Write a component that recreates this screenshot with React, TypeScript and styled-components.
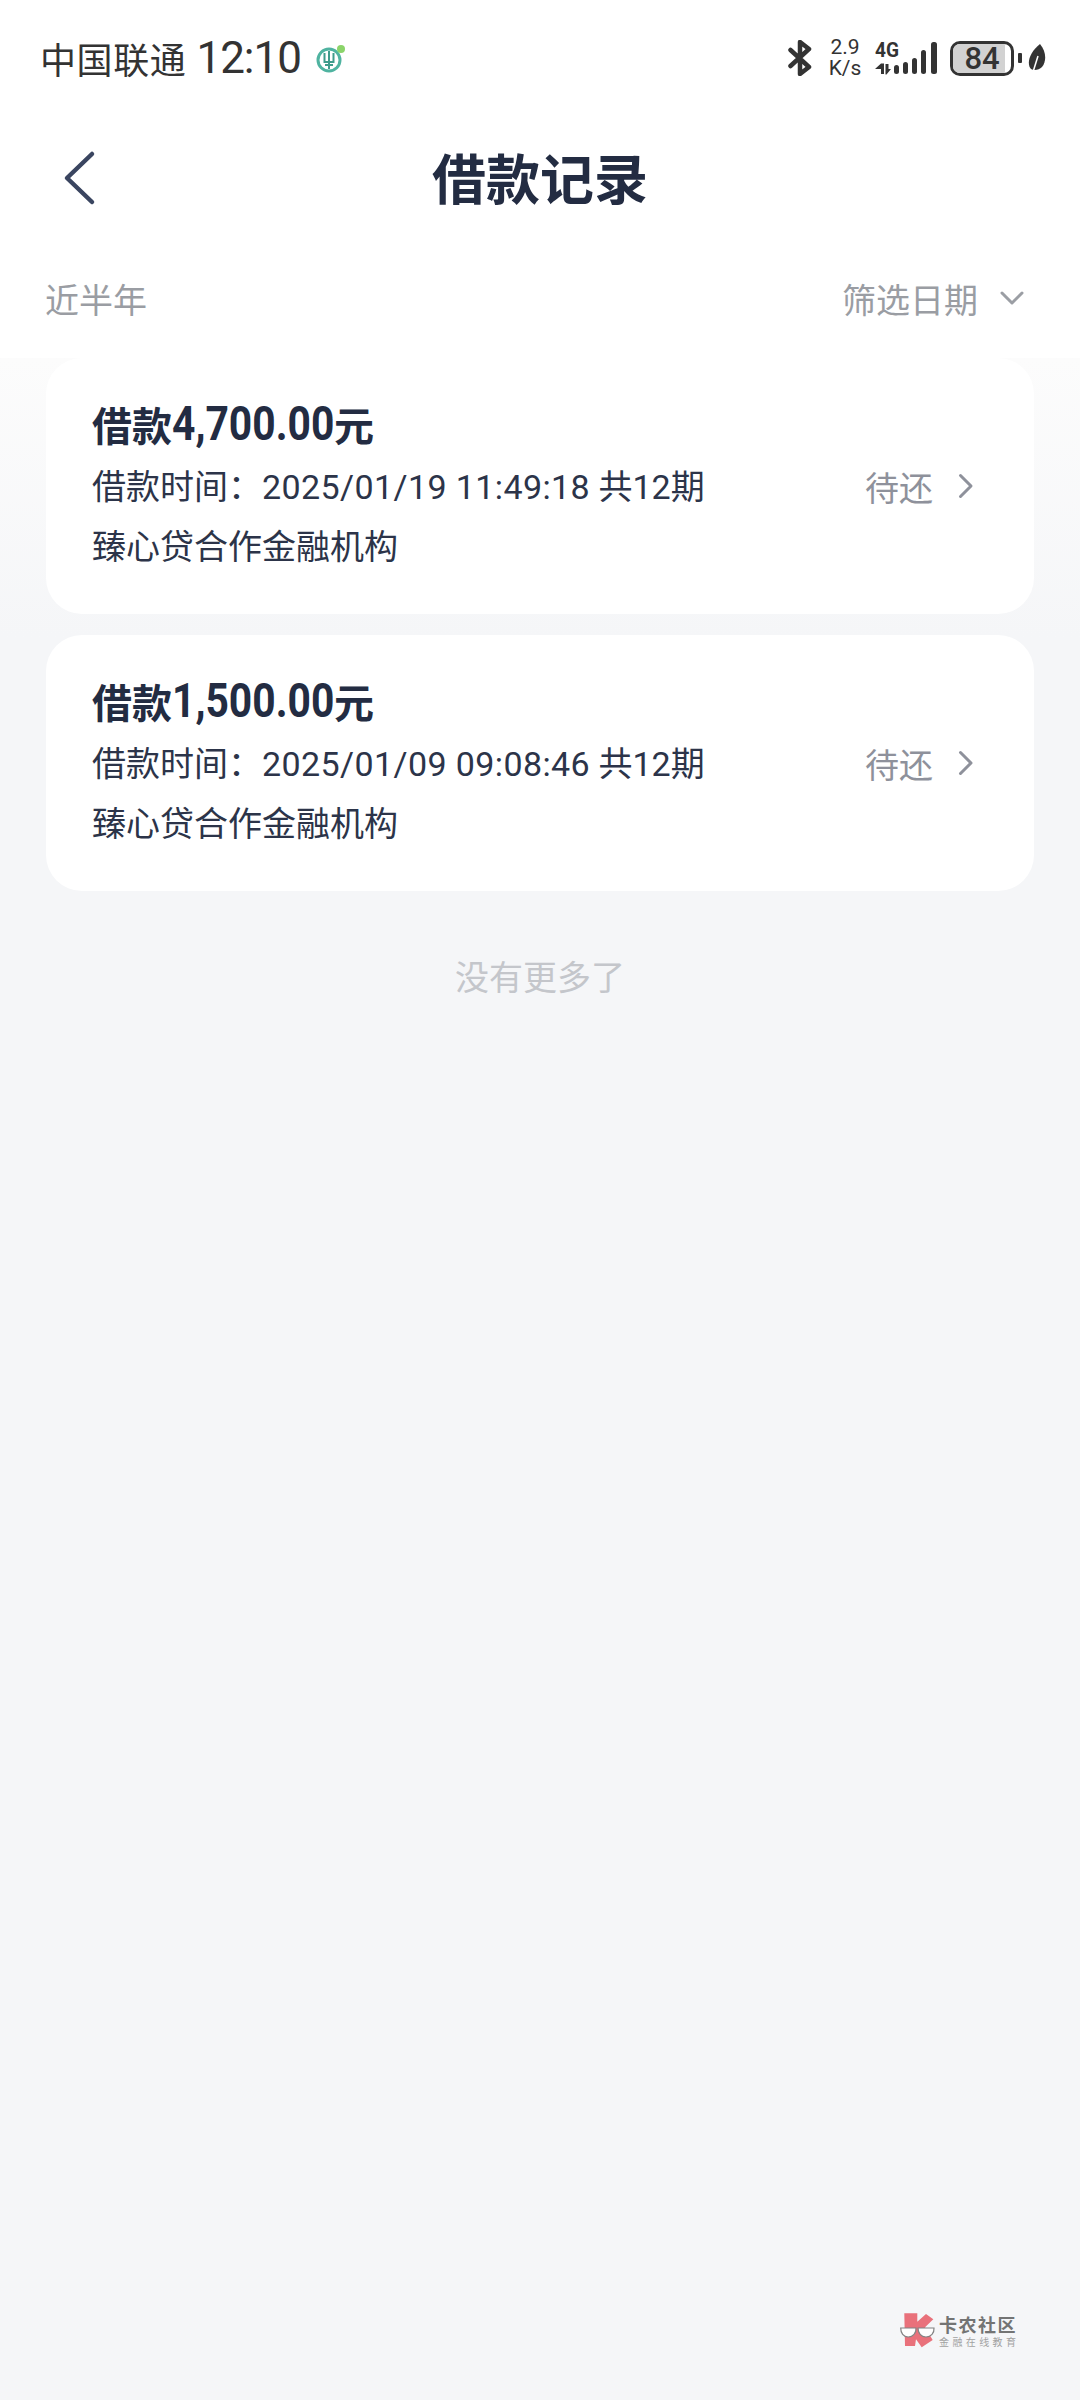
import React from "react";
import styled, { createGlobalStyle } from "styled-components";

const CJK = `"Noto Sans CJK SC", "Noto Sans", sans-serif`;

const GlobalStyle = createGlobalStyle`
  html, body {
    margin: 0;
    padding: 0;
  }
  body {
    font-family: ${CJK};
  }
`;

const records = [
  { amount: "4,700.00", time: "2025/01/19 11:49:18" },
  { amount: "1,500.00", time: "2025/01/09 09:08:46" },
];

const App = () => {
  return (
    <Page>
      <GlobalStyle />
      <Header>
        <StatusBar>
          <StatusLeft>
            <Carrier>中国联通</Carrier>
            <Clock>12:10</Clock>
            <BankIcon />
          </StatusLeft>
          <StatusRight>
            <BluetoothIcon />
            <Speed>
              <span>2.9</span>
              <span>K/s</span>
            </Speed>
            <SignalIcon />
            <Battery>
              <BatteryLevel />
              <BatteryText>84</BatteryText>
            </Battery>
            <BatteryCap />
            <LeafIcon />
          </StatusRight>
        </StatusBar>

        <NavBar>
          <BackButton>
            <svg width="34" height="56" viewBox="0 0 34 56" fill="none">
              <path d="M30 4 L5 28 L30 52" stroke="#3a4560" strokeWidth="4.5" strokeLinecap="round" strokeLinejoin="round" />
            </svg>
          </BackButton>
          <Title>借款记录</Title>
        </NavBar>

        <FilterBar>
          <FilterLabel>近半年</FilterLabel>
          <FilterAction>
            筛选日期
            <svg width="24" height="14" viewBox="0 0 24 14" fill="none">
              <path d="M2 2 L12 12 L22 2" stroke="#9b9ea4" strokeWidth="3" strokeLinecap="round" strokeLinejoin="round" />
            </svg>
          </FilterAction>
        </FilterBar>
      </Header>

      <Content>
        <List>
          {records.map((item) => (
            <Card key={item.time}>
              <CardTitle>
                借款<Amount>{item.amount}</Amount>元
              </CardTitle>
              <CardBody>
                <div>
                  <CardLine>
                    借款时间：<TimeText>{item.time}</TimeText> 共12期
                  </CardLine>
                  <CardLine>臻心贷合作金融机构</CardLine>
                </div>
                <Status>
                  待还
                  <svg width="16" height="26" viewBox="0 0 16 26" fill="none">
                    <path d="M2.5 2.5 L13 13 L2.5 23.5" stroke="#8e919b" strokeWidth="3" strokeLinecap="round" strokeLinejoin="round" />
                  </svg>
                </Status>
              </CardBody>
            </Card>
          ))}
        </List>

        <NoMore>没有更多了</NoMore>
      </Content>

      <Watermark>
        <svg width="36" height="36" viewBox="0 0 36 36">
          <path d="M4.3 0.3 H17.3 V8.7 L26 1 L33.3 6.3 L25 14.3 L32.7 27 L21.7 34.3 L16 26.3 L15 33 H5 Z" fill="#e8636e" />
          <path d="M0.7 15 H16 C16.4 20 13 24 8.2 24 C3.4 24 0.7 20 0.7 15 Z" fill="#fff" stroke="#777" strokeWidth="1.2" />
          <path d="M18 15 H34 C34.4 20 31 24 26 24 C21 24 18 20 18 15 Z" fill="#fff" stroke="#777" strokeWidth="1.2" />
        </svg>
        <WatermarkText>
          <WatermarkName>卡农社区</WatermarkName>
          <WatermarkSlogan>金融在线教育</WatermarkSlogan>
        </WatermarkText>
      </Watermark>
    </Page>
  );
};

const BankIcon = () => (
  <svg width="30" height="30" viewBox="0 0 30 30" fill="none">
    <circle cx="13" cy="17" r="11" stroke="#4fb3a0" strokeWidth="3" />
    <path d="M13 8 V26 M8.5 10 V19 H17.5 V10 M9 22 H17" stroke="#3f9c8c" strokeWidth="2" />
    <circle cx="25" cy="6" r="4" fill="#8bd46a" />
  </svg>
);

const BluetoothIcon = () => (
  <svg width="24" height="36" viewBox="0 0 24 36" fill="none">
    <path d="M2.5 10 L21 27 L12 34 V2 L21 9 L2.5 26" stroke="#333" strokeWidth="4.5" strokeLinejoin="round" strokeLinecap="round" />
  </svg>
);

const SignalIcon = () => (
  <svg width="63" height="44" viewBox="0 0 63 44">
    <text x="0" y="21" fontFamily="Roboto, sans-serif" fontWeight="700" fontSize="21" textLength="24" lengthAdjust="spacingAndGlyphs" fill="#333">
      4G
    </text>
    <path d="M0 33 L6 27.5 H9 V38 H6 V33 Z M10.5 28 H13.5 V33 H16 L11.5 38.5 H10.5 Z" fill="#333" />
    <rect x="19" y="29" width="5" height="9" rx="2.5" fill="#333" />
    <rect x="28" y="26" width="5" height="12" rx="2.5" fill="#333" />
    <rect x="37" y="22" width="5" height="16" rx="2.5" fill="#333" />
    <rect x="46" y="14" width="5" height="24" rx="2.5" fill="#333" />
    <rect x="56" y="6" width="6" height="32" rx="2.5" fill="#333" />
  </svg>
);

const LeafIcon = () => (
  <svg width="18" height="30" viewBox="0 0 18 30">
    <path d="M12 1 C18 8 19 18 14 24 C11 27 6 28 3 26 C-2 20 2 9 12 1 Z" fill="#333" />
    <path d="M5 29 L10 13" stroke="#fff" strokeWidth="1.5" />
  </svg>
);

const Page = styled.div`
  position: relative;
  display: flex;
  flex-direction: column;
  width: 1080px;
  height: 2400px;
  overflow: hidden;
  background: #f5f6f8;
`;

const Header = styled.div`
  background: #ffffff;
`;

const StatusBar = styled.div`
  display: flex;
  align-items: center;
  justify-content: space-between;
  height: 116px;
  padding: 0 34px 0 40px;
  color: #333;
`;

const StatusLeft = styled.div`
  display: flex;
  align-items: center;
  gap: 10px;

  svg {
    margin-left: 5px;
  }
`;

const Carrier = styled.span`
  font-size: 36px;
  line-height: 44px;
  letter-spacing: 0.6px;
`;

const Clock = styled.span`
  font-family: Roboto, sans-serif;
  font-size: 44px;
  line-height: 44px;
  letter-spacing: -1px;
`;

const StatusRight = styled.div`
  display: flex;
  align-items: center;
  gap: 13px;
`;

const Speed = styled.div`
  display: flex;
  flex-direction: column;
  align-items: center;
  width: 34px;
  margin-left: 3px;
  font-family: Roboto, sans-serif;
  font-size: 21px;
  line-height: 21px;
`;

const Battery = styled.div`
  position: relative;
  display: flex;
  align-items: center;
  justify-content: center;
  box-sizing: border-box;
  width: 64px;
  height: 35px;
  margin-left: -1px;
  border: 3px solid #333;
  border-radius: 10px;
  overflow: hidden;
`;

const BatteryLevel = styled.div`
  position: absolute;
  inset: 0 6px 0 0;
  background: #d2d2d2;
`;

const BatteryText = styled.span`
  position: relative;
  font-family: Roboto, sans-serif;
  font-weight: 500;
  font-size: 31px;
  color: #333;
`;

const BatteryCap = styled.div`
  width: 4px;
  height: 10px;
  margin-left: -9px;
  margin-right: -7px;
  background: #333;
  border-radius: 1px;
`;

const NavBar = styled.div`
  position: relative;
  display: flex;
  align-items: center;
  justify-content: center;
  height: 122px;
`;

const BackButton = styled.div`
  position: absolute;
  left: 62px;
  top: 34px;
  display: flex;
`;

const Title = styled.h1`
  margin: 0;
  font-size: 54px;
  font-weight: 700;
  line-height: 76px;
  color: #232c42;
`;

const FilterBar = styled.div`
  display: flex;
  align-items: center;
  justify-content: space-between;
  height: 120px;
  padding: 0 56px 0 45px;
`;

const FilterLabel = styled.span`
  font-size: 34px;
  color: #9a9da3;
`;

const FilterAction = styled.div`
  display: flex;
  align-items: center;
  gap: 22px;
  font-size: 34px;
  color: #9a9da3;
`;

const Content = styled.div`
  flex: 1;
  background: linear-gradient(180deg, #fcfcfc 0, #f5f6f8 280px);
`;

const List = styled.div`
  display: flex;
  flex-direction: column;
  gap: 21px;
  padding: 0 46px;
`;

const Card = styled.div`
  box-sizing: border-box;
  height: 256px;
  padding: 38px 46px 0;
  background: #ffffff;
  border-radius: 36px;
`;

const CardTitle = styled.div`
  height: 58px;
  font-size: 40px;
  font-weight: 700;
  line-height: 56px;
  color: #232c42;
`;

// DIN-like condensed digits: Roboto squeezed horizontally
const Amount = styled.span`
  display: inline-block;
  margin-right: -29px;
  font-family: Roboto, sans-serif;
  font-size: 48px;
  font-weight: 700;
  line-height: 56px;
  vertical-align: top;
  transform: scaleX(0.85);
  transform-origin: left center;
`;

const CardBody = styled.div`
  display: flex;
  align-items: flex-start;
  justify-content: space-between;
  padding-right: 14px;
`;

const CardLine = styled.div`
  margin-top: 6px;
  font-size: 34px;
  line-height: 54px;
  color: #2c3449;
  font-family: Roboto, ${CJK};
`;

const TimeText = styled.span`
  letter-spacing: 0.4px;
`;

const Status = styled.div`
  display: flex;
  align-items: center;
  gap: 25px;
  margin-top: 5px;
  height: 54px;
  font-size: 34px;
  color: #8e919b;
`;

const NoMore = styled.div`
  margin-top: 60px;
  font-size: 34px;
  line-height: 50px;
  text-align: center;
  color: #c4c6cb;
`;

const Watermark = styled.div`
  position: absolute;
  left: 900px;
  top: 2313px;
  display: flex;
  align-items: center;
  gap: 3px;
  opacity: 0.9;
`;

const WatermarkText = styled.div`
  display: flex;
  flex-direction: column;
`;

const WatermarkName = styled.span`
  font-size: 18px;
  font-weight: 700;
  line-height: 21px;
  letter-spacing: 1.5px;
  color: #666;
`;

const WatermarkSlogan = styled.span`
  font-size: 10px;
  line-height: 13px;
  letter-spacing: 3.4px;
  color: #999;
`;

export default App;
